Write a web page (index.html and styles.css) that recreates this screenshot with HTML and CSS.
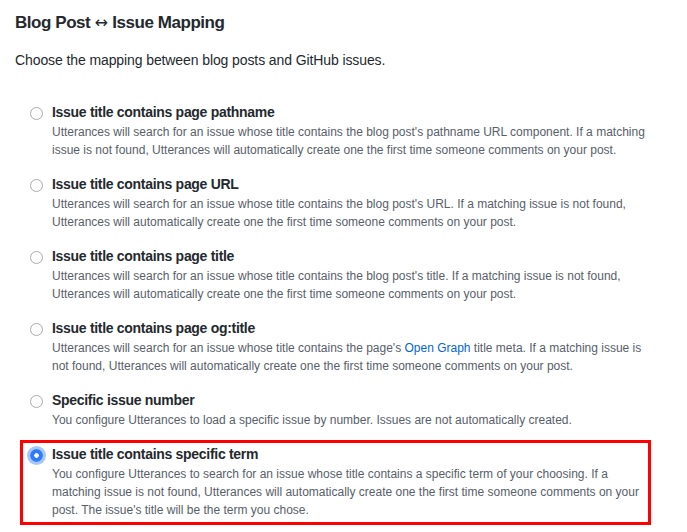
FILE: index.html
```html
<!DOCTYPE html>
<html>
<head>
<meta charset="utf-8">
<link rel="stylesheet" href="styles.css">
</head>
<body>
<h3 class="heading">Blog Post <span class="arrow">↔</span> Issue Mapping</h3>
<p class="intro">Choose the mapping between blog posts and GitHub issues.</p>
<fieldset class="options">
  <div class="option">
    <input class="radio" type="radio" name="mapping">
    <label class="title">Issue title contains page pathname</label>
    <p class="note">Utterances will search for an issue whose title contains the blog post's pathname URL component. If a matching issue is not found, Utterances will automatically create one the first time someone comments on your post.</p>
  </div>
  <div class="option">
    <input class="radio" type="radio" name="mapping">
    <label class="title">Issue title contains page URL</label>
    <p class="note">Utterances will search for an issue whose title contains the blog post's URL. If a matching issue is not found, Utterances will automatically create one the first time someone comments on your post.</p>
  </div>
  <div class="option">
    <input class="radio" type="radio" name="mapping">
    <label class="title">Issue title contains page title</label>
    <p class="note">Utterances will search for an issue whose title contains the blog post's title. If a matching issue is not found, Utterances will automatically create one the first time someone comments on your post.</p>
  </div>
  <div class="option">
    <input class="radio" type="radio" name="mapping">
    <label class="title">Issue title contains page og:title</label>
    <p class="note">Utterances will search for an issue whose title contains the page's <a class="link" href="#">Open Graph</a> title meta. If a matching issue is not found, Utterances will automatically create one the first time someone comments on your post.</p>
  </div>
  <div class="option">
    <input class="radio" type="radio" name="mapping">
    <label class="title">Specific issue number</label>
    <p class="note">You configure Utterances to load a specific issue by number. Issues are not automatically created.</p>
  </div>
  <div class="option selected">
    <input class="radio" type="radio" name="mapping" checked>
    <label class="title">Issue title contains specific term</label>
    <p class="note">You configure Utterances to search for an issue whose title contains a specific term of your choosing. If a matching issue is not found, Utterances will automatically create one the first time someone comments on your post. The issue's title will be the term you chose.</p>
  </div>
</fieldset>
</body>
</html>
```
FILE: styles.css
```css
html, body {
  margin: 0;
  padding: 0;
  background: #fff;
}
body {
  padding: 0 36px 0 15px;
  font-family: "Liberation Sans", Arial, sans-serif;
  color: #24292e;
}
.heading {
  margin: 12px 0 0;
  font-size: 17px;
  line-height: 22px;
  font-weight: 700;
  letter-spacing: -0.45px;
}
.arrow {
  font-family: "DejaVu Sans", sans-serif;
  font-size: 16px;
  font-weight: 400;
  letter-spacing: 0;
}
.intro {
  margin: 16px 0 0;
  font-size: 14px;
  line-height: 20px;
  letter-spacing: -0.1px;
}
.options {
  margin: 28px 0 0 5px;
  padding: 0;
  border: 0;
  display: flex;
  flex-direction: column;
  gap: 5px;
}
.option {
  display: grid;
  grid-template-columns: 29px 1fr;
  border: 3px solid transparent;
  padding: 1px 0 3px;
}
.option.selected {
  border-color: #ff0000;
}
.radio {
  appearance: none;
  -webkit-appearance: none;
  grid-column: 1;
  grid-row: 1;
  margin: 5px 0 0 7px;
  width: 13px;
  height: 13px;
  border-radius: 50%;
  border: 1px solid #a9a9a9;
  background: #fff;
  box-sizing: border-box;
}
.radio:checked {
  border: 0;
  background: radial-gradient(circle, #fff 0 2px, #2f7cf6 2.5px);
  box-shadow: 0 0 0 3px rgba(60, 130, 246, 0.45);
}
.title {
  grid-column: 2;
  grid-row: 1;
  font-size: 14px;
  line-height: 20px;
  font-weight: 700;
  letter-spacing: -0.3px;
}
.note {
  grid-column: 2;
  grid-row: 2;
  margin: 1px 0 0;
  font-size: 12px;
  line-height: 18px;
  color: #586069;
}
.link {
  color: #0366d6;
  text-decoration: none;
}
```
